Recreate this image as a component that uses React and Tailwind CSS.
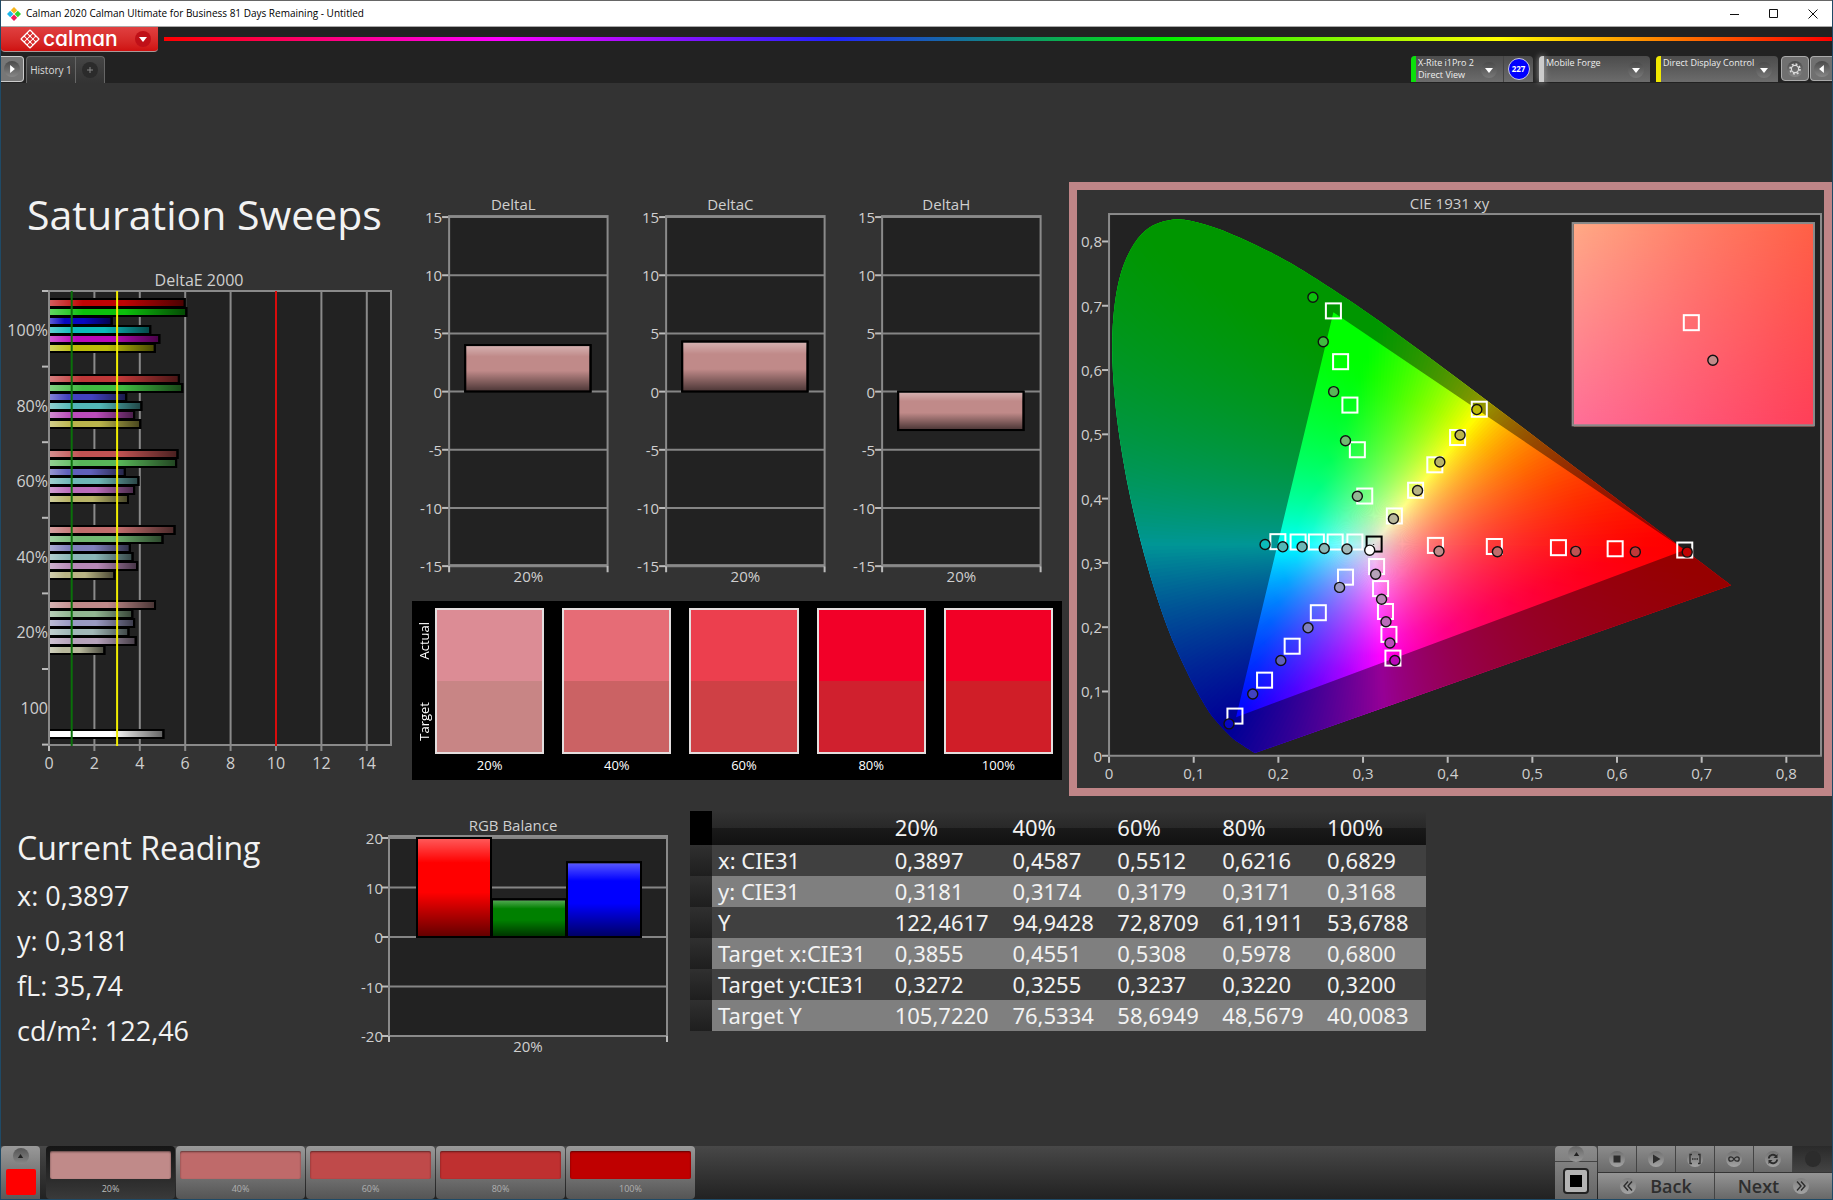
import React from "react";
import { clsx } from "clsx";

const SERIES = ["100%", "80%", "60%", "40%", "20%", "100"];

const GROUP_COLORS = [
  ["#c00404", "#0cc00c", "#0808c0", "#0cbaba", "#ba08ba", "#bcbc08"],
  ["#bf3838", "#40ba40", "#4242c0", "#52b6b6", "#ba4cba", "#bab44c"],
  ["#bf5252", "#58b658", "#6060ba", "#6eb6b6", "#ba6cba", "#b8b468"],
  ["#c06c6c", "#72b872", "#8080bc", "#8ab6b6", "#b688b6", "#b8b484"],
  ["#c08a8a", "#92b692", "#9a9ac2", "#a2b8b8", "#b6a2ba", "#b8b89c"],
];

const DELTA_E = [
  [5.98, 6.05, 2.76, 4.46, 4.86, 4.66],
  [5.72, 5.87, 3.4, 4.07, 3.75, 4.02],
  [5.66, 5.6, 3.34, 3.94, 3.75, 3.48],
  [5.53, 5.0, 3.56, 3.68, 3.88, 2.88],
  [4.67, 3.67, 3.75, 3.5, 3.82, 2.44],
];

const DELTAS = [
  { title: "DeltaL", value: 4.0 },
  { title: "DeltaC", value: 4.3 },
  { title: "DeltaH", value: -3.3 },
];

const SWATCHES = [
  { label: "20%", actual: "#dc8c95", target: "#c88585" },
  { label: "40%", actual: "#e66c76", target: "#cb6264" },
  { label: "60%", actual: "#ec3f4e", target: "#cf4045" },
  { label: "80%", actual: "#f20028", target: "#d0202e" },
  { label: "100%", actual: "#f20026", target: "#d01e28" },
];

const LEVELS = [
  { label: "20%", color: "#c08a89" },
  { label: "40%", color: "#bf6a6a" },
  { label: "60%", color: "#bf4a4a" },
  { label: "80%", color: "#bf3030" },
  { label: "100%", color: "#bf0000" },
];

const READINGS = ["x: 0,3897", "y: 0,3181", "fL: 35,74", "cd/m²: 122,46"];

const TABLE_ROWS = [
  ["x: CIE31", "0,3897", "0,4587", "0,5512", "0,6216", "0,6829"],
  ["y: CIE31", "0,3181", "0,3174", "0,3179", "0,3171", "0,3168"],
  ["Y", "122,4617", "94,9428", "72,8709", "61,1911", "53,6788"],
  ["Target x:CIE31", "0,3855", "0,4551", "0,5308", "0,5978", "0,6800"],
  ["Target y:CIE31", "0,3272", "0,3255", "0,3237", "0,3220", "0,3200"],
  ["Target Y", "105,7220", "76,5334", "58,6949", "48,5679", "40,0083"],
];

// Spectral locus, 1931 xy
const LOCUS = [
  [0.1741, 0.005], [0.1714, 0.0051], [0.1644, 0.0109], [0.1566, 0.0177], [0.144, 0.0297],
  [0.1241, 0.0578], [0.1096, 0.0868], [0.0913, 0.1327], [0.0687, 0.2007], [0.0454, 0.295],
  [0.0235, 0.4127], [0.0082, 0.5384], [0.0039, 0.6548], [0.0139, 0.7502], [0.0389, 0.812],
  [0.0743, 0.8338], [0.1142, 0.8262], [0.1547, 0.8059], [0.1929, 0.7816], [0.2296, 0.7543],
  [0.3016, 0.6923], [0.3731, 0.6245], [0.4441, 0.5547], [0.5125, 0.4866], [0.5752, 0.4242],
  [0.627, 0.3725], [0.6658, 0.334], [0.6915, 0.3083], [0.719, 0.2809], [0.7347, 0.2653],
];

const GAMUT = [[0.68, 0.32], [0.265, 0.69], [0.15, 0.06]];

// Each sweep runs from 100% down to 20%
const TARGETS = [
  [[0.68, 0.32], [0.5978, 0.322], [0.5308, 0.3237], [0.4551, 0.3255], [0.3855, 0.3272]],
  [[0.265, 0.692], [0.2735, 0.613], [0.2845, 0.5455], [0.2933, 0.476], [0.302, 0.404]],
  [[0.1487, 0.0617], [0.1837, 0.1176], [0.2163, 0.1704], [0.2472, 0.2225], [0.2793, 0.2778]],
  [[0.1994, 0.333], [0.2233, 0.3325], [0.2449, 0.3325], [0.2671, 0.3325], [0.2904, 0.3325]],
  [[0.3353, 0.1519], [0.3306, 0.1888], [0.3265, 0.2244], [0.3207, 0.26], [0.316, 0.2943]],
  [[0.4373, 0.539], [0.4117, 0.495], [0.3848, 0.4526], [0.3621, 0.413], [0.337, 0.373]],
];

const ACTUALS = [
  [[0.6829, 0.3168], [0.6216, 0.3171], [0.5512, 0.3179], [0.4587, 0.3174], [0.3897, 0.3181]],
  [[0.2408, 0.7133], [0.253, 0.644], [0.2653, 0.5664], [0.2793, 0.49], [0.2933, 0.4037]],
  [[0.1417, 0.0496], [0.1697, 0.096], [0.2029, 0.1481], [0.235, 0.199], [0.2723, 0.2619]],
  [[0.1843, 0.3287], [0.2052, 0.325], [0.228, 0.325], [0.2542, 0.3223], [0.281, 0.3217]],
  [[0.3376, 0.1481], [0.3318, 0.1755], [0.3271, 0.2085], [0.3219, 0.2435], [0.3149, 0.2823]],
  [[0.4344, 0.5385], [0.4146, 0.499], [0.3907, 0.457], [0.3644, 0.4126], [0.3359, 0.3687]],
];

const WHITE = [0.3127, 0.329];

const px = (x) => 32 + x * 845.5;
const py = (y) => 565 - y * 642;

const smoothPath = (list) => {
  const p = list.map(([x, y]) => [px(x), py(y)]);
  let d = `M${p[0][0]} ${p[0][1]}`;
  for (let i = 0; i < p.length - 1; i++) {
    const a = p[Math.max(i - 1, 0)];
    const b = p[i];
    const c = p[i + 1];
    const e = p[Math.min(i + 2, p.length - 1)];
    d += `C${b[0] + (c[0] - a[0]) / 6} ${b[1] + (c[1] - a[1]) / 6} ${c[0] - (e[0] - b[0]) / 6} ${
      c[1] - (e[1] - b[1]) / 6
    } ${c[0]} ${c[1]}`;
  }
  return d + "Z";
};

const gamutPath = `M${GAMUT.map(([x, y]) => `${px(x)} ${py(y)}`).join("L")}Z`;

const xyToRgb = (x, y) => {
  const sy = Math.max(y, 0.001);
  const X = x / sy;
  const Z = (1 - x - sy) / sy;
  const rgb = [
    3.2406 * X - 1.5372 - 0.4986 * Z,
    -0.9689 * X + 1.8758 + 0.0415 * Z,
    0.0557 * X - 0.204 + 1.057 * Z,
  ].map((v) => Math.max(v, 0));
  const max = Math.max(...rgb);
  return `rgb(${rgb.map((v) => Math.round((255 * v) / max)).join(",")})`;
};

// The diagram is filled with thin wedges round the white point
const WEDGES = 360;
const RADIUS = 440;
const STOPS = Array.from({ length: 25 }, (_, i) => Math.pow(i / 24, 1.4));

const wedges = Array.from({ length: WEDGES }, (_, i) => {
  const step = (2 * Math.PI) / WEDGES;
  const angle = i * step;
  const cx = px(WHITE[0]);
  const cy = py(WHITE[1]);
  const at = (a, r) => [cx + Math.cos(a) * r, cy + Math.sin(a) * r];
  const [x1, y1] = at(angle - step / 2, RADIUS + 20);
  const [x2, y2] = at(angle + step * 1.5, RADIUS + 20);
  return {
    id: `wedge-${i}`,
    points: `${cx},${cy} ${x1},${y1} ${x2},${y2}`,
    stops: STOPS.map((t) => {
      const [x, y] = at(angle, t * RADIUS);
      return { t, color: xyToRgb((x - 32) / 845.5, (565 - y) / 642) };
    }),
  };
});

const Shades = ({ id, vertical }) => (
  <linearGradient id={id} x1="0" y1="0" x2={vertical ? 0 : 1} y2={vertical ? 1 : 0}>
    <stop offset="0" stopColor="#fff" stopOpacity="0.36" />
    <stop offset="0.25" stopColor="#fff" stopOpacity="0" />
    <stop offset="0.55" stopColor="#000" stopOpacity="0" />
    <stop offset="1" stopColor="#000" stopOpacity="0.62" />
  </linearGradient>
);

const Bar = ({ x, y, width, height, color, shade }) => (
  <g stroke="#000" strokeWidth="2">
    <rect x={x} y={y} width={width} height={height} fill={color} />
    <rect x={x} y={y} width={width} height={height} fill={`url(#${shade})`} />
  </g>
);

const CHART_TEXT = "fill-[#cfcfcf] font-['Open_Sans',sans-serif] text-[15px]";
const CHART_TEXT_LG = "fill-[#cfcfcf] font-['Open_Sans',sans-serif] text-base";

const DeltaEChart = () => {
  const left = 48;
  const top = 29;
  const unit = 22.7;
  const group = 75.6;
  return (
    <svg viewBox="0 0 411 518" className="block w-full" role="img" aria-label="DeltaE 2000">
      <defs>
        <Shades id="shade-e" />
      </defs>
      <text x="198" y="24" textAnchor="middle" className={CHART_TEXT_LG}>
        DeltaE 2000
      </text>
      <rect x={left} y={top} width="342" height="454" fill="#222" />
      {[2, 4, 6, 8, 10, 12, 14].map((v) => (
        <line key={v} x1={left + v * unit} x2={left + v * unit} y1={top} y2={top + 460} stroke="#8a8a8a" strokeWidth="2" />
      ))}
      {[0, 1, 2, 3, 4, 5, 6].map((i) => (
        <line key={i} x1={left - 7} x2={left} y1={top + i * group} y2={top + i * group} stroke="#bbb" strokeWidth="2" />
      ))}
      <line x1={left} x2={left} y1={top + 454} y2={top + 460} stroke="#bbb" strokeWidth="2" />
      {DELTA_E.map((values, g) =>
        values.map((v, i) => (
          <Bar
            key={`${g}-${i}`}
            x={left}
            y={Math.round(top + 8 + g * group + i * 9)}
            width={v * unit}
            height="8"
            color={GROUP_COLORS[g][i]}
            shade="shade-e"
          />
        ))
      )}
      <Bar x={left} y={top + 439} width={5.04 * unit} height="8" color="#fff" shade="shade-e" />
      <rect x={left} y={top} width="342" height="454" fill="none" stroke="#8a8a8a" strokeWidth="2" />
      <line x1={left + unit} x2={left + unit} y1={top} y2={top + 455} stroke="#0a700a" strokeWidth="2" />
      <line x1={left + 3 * unit} x2={left + 3 * unit} y1={top} y2={top + 455} stroke="#f2ee00" strokeWidth="2" />
      <line x1={left + 10 * unit} x2={left + 10 * unit} y1={top} y2={top + 455} stroke="#d80c0c" strokeWidth="2" />
      {SERIES.map((label, i) => (
        <text key={label} x={left - 1} y={top + 45 + i * group} textAnchor="end" className={CHART_TEXT_LG}>
          {label}
        </text>
      ))}
      {[0, 2, 4, 6, 8, 10, 12, 14].map((v) => (
        <text key={v} x={left + v * unit} y={top + 478} textAnchor="middle" className={CHART_TEXT_LG}>
          {v}
        </text>
      ))}
    </svg>
  );
};

const DeltaChart = ({ title, value }) => {
  const zero = 200;
  const unit = 11.6;
  const h = Math.abs(value) * unit;
  return (
    <svg viewBox="0 0 216 400" className="block w-full" role="img" aria-label={title}>
      <defs>
        <Shades id={`shade-${title}`} vertical />
      </defs>
      <text x="101" y="19" textAnchor="middle" className={CHART_TEXT}>
        {title}
      </text>
      <rect x="37" y="25" width="158" height="348" fill="#222" />
      {[15, 10, 5, 0, -5, -10, -15].map((v) => (
        <g key={v}>
          <line x1="37" x2="195" y1={zero - v * unit} y2={zero - v * unit} stroke="#858585" strokeWidth="2" />
          <line x1="30" x2="37" y1={zero - v * unit} y2={zero - v * unit} stroke="#bbb" strokeWidth="2" />
          <text x="30" y={zero - v * unit + 6} textAnchor="end" className={CHART_TEXT}>
            {v}
          </text>
        </g>
      ))}
      <rect x="37" y="25" width="158" height="348" fill="none" stroke="#8a8a8a" strokeWidth="2" />
      <path d="M37 374v6M195 374v6" stroke="#bbb" strokeWidth="2" />
      <Bar
        x="53"
        y={value > 0 ? zero - h : zero}
        width="125"
        height={h}
        color="#c08a89"
        shade={`shade-${title}`}
      />
      <text x="116" y="390" textAnchor="middle" className={CHART_TEXT}>
        20%
      </text>
    </svg>
  );
};

const RgbChart = () => {
  const zero = 137;
  const unit = 4.95;
  const bars = [
    { value: 20, color: "#ff0000" },
    { value: 7.6, color: "#008000" },
    { value: 15.1, color: "#0000ff" },
  ];
  return (
    <svg viewBox="0 0 340 260" className="block w-full" role="img" aria-label="RGB Balance">
      <defs>
        <Shades id="shade-rgb" vertical />
      </defs>
      <text x="163" y="31" textAnchor="middle" className={CHART_TEXT}>
        RGB Balance
      </text>
      <rect x="39" y="36" width="278" height="200" fill="#222" />
      {[20, 10, 0, -10, -20].map((v) => (
        <g key={v}>
          <line x1="39" x2="317" y1={zero - v * unit} y2={zero - v * unit} stroke="#858585" strokeWidth="2" />
          <line x1="32" x2="39" y1={zero - v * unit} y2={zero - v * unit} stroke="#bbb" strokeWidth="2" />
          <text x="33" y={zero - v * unit + 6} textAnchor="end" className={CHART_TEXT}>
            {v}
          </text>
        </g>
      ))}
      <rect x="39" y="36" width="278" height="200" fill="none" stroke="#8a8a8a" strokeWidth="2" />
      <path d="M39 236v6M317 236v6" stroke="#bbb" strokeWidth="2" />
      {bars.map((bar, i) => (
        <Bar
          key={bar.color}
          x={67 + i * 75}
          y={zero - bar.value * unit}
          width="74"
          height={bar.value * unit}
          color={bar.color}
          shade="shade-rgb"
        />
      ))}
      <text x="178" y="252" textAnchor="middle" className={CHART_TEXT}>
        20%
      </text>
    </svg>
  );
};

const CieChart = () => (
  <svg viewBox="0 0 746 597" className="block w-full" role="img" aria-label="CIE 1931 xy">
    <defs>
      <clipPath id="locus">
        <path d={smoothPath(LOCUS)} />
      </clipPath>
      {wedges.map((w) => (
        <radialGradient
          key={w.id}
          id={w.id}
          gradientUnits="userSpaceOnUse"
          cx={px(WHITE[0])}
          cy={py(WHITE[1])}
          r={RADIUS}
        >
          {w.stops.map((s) => (
            <stop key={s.t} offset={s.t} stopColor={s.color} />
          ))}
        </radialGradient>
      ))}
      <linearGradient id="inset-top">
        <stop offset="0" stopColor="#ffaa86" />
        <stop offset="0.5" stopColor="#ff8068" />
        <stop offset="1" stopColor="#ff6045" />
      </linearGradient>
      <linearGradient id="inset-bottom">
        <stop offset="0" stopColor="#ff6e98" />
        <stop offset="1" stopColor="#ff3e58" />
      </linearGradient>
      <linearGradient id="inset-fade" x1="0" y1="0" x2="0" y2="1">
        <stop offset="0" stopColor="#000" />
        <stop offset="1" stopColor="#fff" />
      </linearGradient>
      <mask id="inset-mask">
        <rect x="496" y="33" width="240" height="203" fill="url(#inset-fade)" />
      </mask>
    </defs>
    <text x="372" y="19" textAnchor="middle" className={CHART_TEXT}>
      CIE 1931 xy
    </text>
    <rect x="32" y="24" width="711" height="541" fill="#222" stroke="#8a8a8a" strokeWidth="2" />

    <g clipPath="url(#locus)">
      {wedges.map((w) => (
        <polygon key={w.id} points={w.points} fill={`url(#${w.id})`} />
      ))}
      <path d={`M0 0H746V597H0Z${gamutPath}`} fillRule="evenodd" fill="#000" fillOpacity="0.41" />
    </g>

    {[0, 1, 2, 3, 4, 5, 6, 7, 8].map((v) => {
      const label = v === 0 ? "0" : `0,${v}`;
      return (
        <g key={v}>
          <line x1={px(v / 10)} x2={px(v / 10)} y1="566" y2="572" stroke="#bbb" strokeWidth="2" />
          <line x1="25" x2="31" y1={py(v / 10)} y2={py(v / 10)} stroke="#bbb" strokeWidth="2" />
          <text x={px(v / 10)} y="588" textAnchor="middle" className={CHART_TEXT}>
            {label}
          </text>
          <text x="25" y={py(v / 10) + 6} textAnchor="end" className={CHART_TEXT}>
            {label}
          </text>
        </g>
      );
    })}

    {TARGETS.flat().map(([x, y]) => (
      <rect key={`${x}-${y}`} x={px(x) - 7.5} y={py(y) - 7.5} width="15" height="15" fill="none" stroke="#fff" strokeWidth="2" />
    ))}
    <rect x={px(0.3131) - 7.5} y={py(0.3293) - 7.5} width="15" height="15" fill="none" stroke="#000" strokeWidth="2" />
    {ACTUALS.map((sweep, s) =>
      sweep.map(([x, y], level) => (
        <circle key={`${x}-${y}`} cx={px(x)} cy={py(y)} r="5" fill={GROUP_COLORS[level][s]} stroke="#111" strokeWidth="1.4" />
      ))
    )}
    <circle cx={px(0.3079)} cy={py(0.3198)} r="5" fill="#fff" stroke="#111" strokeWidth="1.4" />

    <rect x="496" y="33" width="240" height="203" fill="url(#inset-top)" />
    <rect x="496" y="33" width="240" height="203" fill="url(#inset-bottom)" mask="url(#inset-mask)" />
    <rect x="495" y="33" width="241" height="202" fill="none" stroke="#8a8a8a" strokeWidth="2" />
    <rect x="606" y="125" width="15" height="15" fill="none" stroke="#fff" strokeWidth="2" />
    <circle cx="635" cy="170" r="5" fill="#c08a89" stroke="#111" strokeWidth="1.4" />
  </svg>
);

const RoundIcon = ({ className, children }) => (
  <span
    className={clsx("flex size-4 shrink-0 items-center justify-center rounded-full bg-linear-to-b", className)}
  >
    {children}
  </span>
);

const CaretDown = () => (
  <svg viewBox="0 0 10 6" className="h-[5px] w-2">
    <path d="M0 0h10L5 6z" fill="#fff" />
  </svg>
);

const TitleBar = () => (
  <div className="flex h-[27px] items-center border-t border-b border-t-[#666] border-b-[#aaa] bg-white">
    <svg viewBox="0 0 14 14" className="ml-[6px] size-[14px]">
      <path d="M7 0l3.2 3.2L7 6.4 3.8 3.2z" fill="#f7b51c" />
      <path d="M3.2 3.8L6.4 7l-3.2 3.2L0 7z" fill="#19b6ea" />
      <path d="M10.8 3.8L14 7l-3.2 3.2L7.6 7z" fill="#2fd12f" />
      <path d="M7 7.6l3.2 3.2L7 14l-3.2-3.2z" fill="#ee1c5c" />
    </svg>
    <span className="ml-[5px] font-['Open_Sans',sans-serif] text-[10px] text-black">
      Calman 2020 Calman Ultimate for Business 81 Days Remaining - Untitled
    </span>
    <div className="ml-auto flex h-full">
      <button type="button" aria-label="Minimize" className="flex w-[39px] items-center justify-center">
        <svg viewBox="0 0 10 10" className="size-[10px]">
          <path d="M0 5.5h9" stroke="#111" />
        </svg>
      </button>
      <button type="button" aria-label="Maximize" className="flex w-[39px] items-center justify-center">
        <svg viewBox="0 0 10 10" className="size-[10px]">
          <path d="M.5.5h8v8h-8z" stroke="#111" fill="none" />
        </svg>
      </button>
      <button type="button" aria-label="Close" className="flex w-[39px] items-center justify-center">
        <svg viewBox="0 0 10 10" className="size-[10px]">
          <path d="M.5.5l9 9M9.5.5l-9 9" stroke="#111" />
        </svg>
      </button>
    </div>
  </div>
);

const Logo = () => (
  <svg viewBox="0 0 20 20" className="size-5">
    <g transform="rotate(45 10 10)">
      <rect x="3" y="3" width="14" height="14" rx="1" fill="#fff" />
      {[4.3, 8.4, 12.5].map((x) =>
        [4.3, 8.4, 12.5].map((y) => <rect key={`${x}-${y}`} x={x} y={y} width="3.2" height="3.2" rx="0.6" fill="#d82828" />)
      )}
    </g>
  </svg>
);

const DeviceMenu = ({ lines, bar, width, children }) => (
  <div className={clsx("flex h-[26px] rounded-t-sm bg-linear-to-b from-[#4c4c4c] to-[#6c6c6c]", width)}>
    <button type="button" aria-haspopup="menu" className="flex min-w-0 flex-1 text-left">
      <span className={clsx("h-full w-[5px] shrink-0 rounded-tl-sm", bar)} />
      <span className="mt-px ml-[2px] min-w-0 flex-1 font-['Open_Sans',sans-serif] text-[9px] leading-3 whitespace-nowrap text-[#eee]">
        {lines.map((line) => (
          <span key={line} className="block">
            {line}
          </span>
        ))}
      </span>
      <RoundIcon className="mt-[6px] mr-[6px] from-[#4a4a4a] to-[#787878]">
        <CaretDown />
      </RoundIcon>
    </button>
    {children}
  </div>
);

const Header = () => (
  <header className="bg-[#222]">
    <div className="flex h-[29px] items-start">
      <button
        type="button"
        className="flex h-[25px] w-[157px] items-center rounded-b-[4px] border-b border-[#a99] bg-linear-to-b from-[#e04040] to-[#cf0f0f] pl-[19px]"
      >
        <Logo />
        <span className="ml-[3px] font-['Inter',sans-serif] text-[21px] leading-5 font-medium text-white [font-feature-settings:'cv11']">
          calman
        </span>
        <span className="mr-[7px] ml-auto flex size-4 items-center justify-center rounded-full bg-[#c01018]">
          <CaretDown />
        </span>
      </button>
      <div className="mt-[10px] ml-[6px] h-1 flex-1 bg-[linear-gradient(to_right,#f00,#f0f_20%,#22f_40%,#0e0_60%,#ff0_80%,#f00)]" />
    </div>
    <div className="flex h-[27px]">
      <button
        type="button"
        aria-label="Expand panel"
        className="flex h-[26px] w-[23px] items-center justify-center rounded-r-[4px] border border-l-0 border-[#ccc] bg-[#777]"
      >
        <RoundIcon className="from-[#4a4a4a] to-[#888]">
          <svg viewBox="0 0 6 10" className="h-2 w-[5px]">
            <path d="M0 0l6 5-6 5z" fill="#fff" />
          </svg>
        </RoundIcon>
      </button>
      <div className="ml-[2px] flex rounded-t-[4px] border border-b-0 border-[#666] bg-linear-to-b from-[#454545] to-[#333]">
        <button
          type="button"
          className="w-[49px] border-r border-[#666] font-['Open_Sans',sans-serif] text-[10px] whitespace-nowrap text-[#ddd]"
        >
          History 1
        </button>
        <button type="button" aria-label="Add history" className="flex w-7 items-center justify-center">
          <span className="flex size-4 items-center justify-center rounded-full bg-[#2b2b2b]">
            <svg viewBox="0 0 6 6" className="size-[6px]">
              <path d="M3 0v6M0 3h6" stroke="#888" />
            </svg>
          </span>
        </button>
      </div>
      <div className="ml-auto flex">
        <DeviceMenu lines={["X-Rite i1Pro 2", "Direct View"]} bar="bg-[#0be00b]" width="w-[122px]">
          <span className="flex w-[30px] items-center justify-center border-l border-[#444]">
            <span className="flex size-[22px] items-center justify-center rounded-full border border-[#ccd] bg-[#00f] font-['Open_Sans',sans-serif] text-[8px] font-bold text-white">
              227
            </span>
          </span>
        </DeviceMenu>
        <span className="w-[6px]" />
        <DeviceMenu lines={["Mobile Forge"]} bar="bg-[#ccc] shadow-[0_0_6px_#aaa]" width="w-[111px]" />
        <span className="w-[6px]" />
        <DeviceMenu lines={["Direct Display Control"]} bar="bg-[#f0e800]" width="w-[122px]" />
        <button
          type="button"
          aria-label="Settings"
          className="ml-[3px] flex h-[25px] w-7 items-center justify-center rounded-[4px] border border-[#aaa] bg-[#707070]"
        >
          <RoundIcon className="from-[#4a4a4a] to-[#888]">
            <svg viewBox="0 0 12 12" className="size-3">
              <circle cx="6" cy="6" r="3.6" fill="none" stroke="#ddd" strokeWidth="1.2" />
              <circle cx="6" cy="6" r="5" fill="none" stroke="#ddd" strokeWidth="1.6" strokeDasharray="1.96 1.96" />
            </svg>
          </RoundIcon>
        </button>
        <button
          type="button"
          aria-label="Collapse panel"
          className="ml-px flex h-[25px] w-[22px] items-center justify-center rounded-l-[4px] border border-r-0 border-[#aaa] bg-[#707070]"
        >
          <RoundIcon className="from-[#4a4a4a] to-[#888]">
            <svg viewBox="0 0 6 10" className="h-2 w-[5px]">
              <path d="M6 0L0 5l6 5z" fill="#fff" />
            </svg>
          </RoundIcon>
        </button>
      </div>
    </div>
  </header>
);

const SwatchPanel = () => (
  <div className="flex bg-black pt-[7px] pr-[9px] pb-[5px] font-['Open_Sans',sans-serif] text-[13px] leading-5 text-white">
    <div className="flex h-[146px] w-[23px] flex-col items-center justify-between py-[14px]">
      <span className="rotate-180 [writing-mode:vertical-rl]">Actual</span>
      <span className="rotate-180 [writing-mode:vertical-rl]">Target</span>
    </div>
    <div className="grid flex-1 grid-cols-5 gap-[18px]">
      {SWATCHES.map((s) => (
        <div key={s.label} className="text-center">
          <div className="h-[146px] border-2 border-[#e4dede]">
            <div className="h-1/2" style={{ backgroundColor: s.actual }} />
            <div className="h-1/2" style={{ backgroundColor: s.target }} />
          </div>
          <div className="mt-px">{s.label}</div>
        </div>
      ))}
    </div>
  </div>
);

const ReadingsTable = () => (
  <table className="w-full table-fixed border-collapse font-['Noto_Sans',sans-serif] text-[22px] leading-[31px] text-[#f2f2f2]">
    <colgroup>
      <col className="w-[3%]" />
      <col className="w-[24%]" />
      <col className="w-[16%]" />
      <col />
      <col />
      <col />
      <col />
    </colgroup>
    <thead>
      <tr className="h-[34px] bg-[linear-gradient(#333,#282828_50%,#1a1a1a_50%,#111)] text-left">
        <td className="bg-black" />
        <td />
        {["20%", "40%", "60%", "80%", "100%"].map((h) => (
          <th key={h} scope="col" className="pl-[6px] font-normal">
            {h}
          </th>
        ))}
      </tr>
    </thead>
    <tbody>
      {TABLE_ROWS.map((row, i) => (
        <tr key={row[0]} className={i % 2 ? "bg-[#7f7f7f]" : "bg-[#404040]"}>
          <td className="bg-linear-to-b from-[#303030] to-[#1e1e1e]" />
          {row.map((cell, c) => (
            <td key={c} className="pl-[6px] whitespace-nowrap">
              {cell}
            </td>
          ))}
        </tr>
      ))}
    </tbody>
  </table>
);

const TransportButton = ({ label, children }) => (
  <button
    type="button"
    aria-label={label}
    className="flex items-center justify-center border-r border-[#444] bg-linear-to-b from-[#8c8c8c] to-[#6a6a6a]"
  >
    <RoundIcon className="from-[#707070] to-[#a4a4a4]">
      <svg viewBox="0 0 12 12" className="size-3" fill="none" stroke="#2c2c2c" strokeWidth="1.3">
        {children}
      </svg>
    </RoundIcon>
  </button>
);

const Footer = () => (
  <footer className="mt-auto flex h-[54px] border-b border-[#1f4a66] bg-linear-to-b from-[#484848] to-[#222] font-['Open_Sans',sans-serif]">
    <button
      type="button"
      aria-label="Current color"
      className="flex w-[39px] flex-col items-center rounded-t-[4px] bg-linear-to-b from-[#999] to-[#5a5a5a]"
    >
      <RoundIcon className="mt-[2px] from-[#555] to-[#888]">
        <svg viewBox="0 0 8 6" className="h-1 w-[7px]">
          <path d="M4 0l4 6H0z" fill="#222" />
        </svg>
      </RoundIcon>
      <span className="mt-[5px] h-[26px] w-[30px] rounded-xs bg-[#f00]" />
    </button>
    <div className="ml-[6px] flex gap-px">
      {LEVELS.map((level, i) => (
        <button
          key={level.label}
          type="button"
          className={clsx(
            "flex w-[129px] flex-col rounded-[4px] bg-linear-to-b px-1 pt-[5px] text-[9px] leading-5",
            i === 0 ? "from-[#151515] to-[#3a3a3a] text-[#bbb]" : "from-[#999] to-[#555] text-[#b0b0b0]"
          )}
        >
          <span
            className="h-[31px] w-full rounded-xs shadow-[inset_0_1px_2px_rgba(0,0,0,0.5)]"
            style={{ backgroundColor: level.color }}
          />
          <span className="w-full text-center">{level.label}</span>
        </button>
      ))}
    </div>
    <div className="ml-auto flex">
      <div className="flex w-[42px] flex-col rounded-t-[4px] bg-linear-to-b from-[#8c8c8c] to-[#666]">
        <button type="button" aria-label="Show more" className="flex h-4 items-center justify-center border-b border-[#444]">
          <RoundIcon className="from-[#666] to-[#999]">
            <svg viewBox="0 0 8 6" className="h-1 w-[7px]">
              <path d="M4 0l4 6H0z" fill="#222" />
            </svg>
          </RoundIcon>
        </button>
        <button type="button" aria-label="Pattern window" className="flex flex-1 items-center justify-center">
          <span className="flex size-[26px] items-center justify-center rounded-[4px] border-2 border-[#222] bg-[#b4b4b4]">
            <span className="size-3 bg-black" />
          </span>
        </button>
      </div>
      <div className="ml-px flex w-[234px] flex-col">
        <div className="grid h-[26px] grid-cols-6">
          <TransportButton label="Stop">
            <path d="M2.5 2.5h7v7h-7z" fill="#2c2c2c" stroke="none" />
          </TransportButton>
          <TransportButton label="Play">
            <path d="M3 1.5l7.5 4.5L3 10.5z" fill="#2c2c2c" stroke="none" />
          </TransportButton>
          <TransportButton label="Read series">
            <path d="M3 1.500H1v9h2M9 1.500h2v9H9" />
            <path d="M3 6h1.500M5.300 6h1.400M7.500 6H9" />
          </TransportButton>
          <TransportButton label="Read continuously">
            <path d="M6 6C5 4.300 4.200 3.800 3 3.800a2.200 2.200 0 000 4.400c1.200 0 2-.5 3-2.200s1.800-2.200 3-2.200a2.200 2.200 0 010 4.400C7.800 8.200 7 7.700 6 6z" />
          </TransportButton>
          <TransportButton label="Refresh">
            <path d="M1.800 5.500a4.200 4.200 0 017.400-2.200M10.200 6.500a4.200 4.200 0 01-7.400 2.200" strokeWidth="1.8" />
            <path d="M10.500 1v4h-4zM1.500 11V7h4z" fill="#2c2c2c" stroke="none" />
          </TransportButton>
          <span className="flex items-center justify-center bg-linear-to-b from-[#2a2a2a] to-[#444]">
            <span className="size-4 rounded-full bg-[#2c2c2c]" />
          </span>
        </div>
        <div className="grid flex-1 grid-cols-2 pt-px font-['Open_Sans',sans-serif] text-lg leading-6 font-semibold text-[#2e2e2e]">
          <button
            type="button"
            className="flex items-center justify-center gap-[14px] border-r border-[#444] bg-linear-to-b from-[#959595] to-[#686868]"
          >
            <RoundIcon className="from-[#808080] to-[#a4a4a4]">
              <svg viewBox="0 0 10 10" className="size-[10px]" fill="none" stroke="#2c2c2c" strokeWidth="1.4">
                <path d="M5 .5L1 5l4 4.5M9 .5L5 5l4 4.5" />
              </svg>
            </RoundIcon>
            Back
          </button>
          <button
            type="button"
            className="flex items-center justify-center gap-[14px] bg-linear-to-b from-[#959595] to-[#686868]"
          >
            Next
            <RoundIcon className="from-[#808080] to-[#a4a4a4]">
              <svg viewBox="0 0 10 10" className="size-[10px]" fill="none" stroke="#2c2c2c" strokeWidth="1.4">
                <path d="M1 .5L5 5 1 9.5M5 .5L9 5 5 9.5" />
              </svg>
            </RoundIcon>
          </button>
        </div>
      </div>
    </div>
  </footer>
);

export default function App() {
  return (
    <div className="flex min-h-screen flex-col border-x border-[#1f4a66] bg-[#333]">
      <TitleBar />
      <Header />
      <main>
        <div className="grid grid-cols-[411fr_650fr_770fr] items-start pt-[99px]">
          <section>
            <h1 className="pb-4 pl-[26px] font-['Open_Sans',sans-serif] text-[41px] leading-[64px] whitespace-nowrap text-[#f2f2f2]">
              Saturation Sweeps
            </h1>
            <DeltaEChart />
          </section>
          <section className="pt-[9px]">
            <div className="grid grid-cols-3">
              {DELTAS.map((d) => (
                <DeltaChart key={d.title} title={d.title} value={d.value} />
              ))}
            </div>
            <div className="mt-[9px]">
              <SwatchPanel />
            </div>
          </section>
          <section className="ml-[7px] border-8 border-[#bf8587]">
            <CieChart />
          </section>
        </div>
        <div className="grid grid-cols-[349fr_340fr_736fr_406fr] items-start">
          <section className="pt-7 pl-4 font-['Open_Sans',sans-serif] whitespace-nowrap text-[#f2f2f2]">
            <h2 className="pb-px text-[32px] leading-[48px]">Current Reading</h2>
            {READINGS.map((r) => (
              <p key={r} className="text-[27px] leading-[45px]">
                {r}
              </p>
            ))}
          </section>
          <section className="pt-1">
            <RgbChart />
          </section>
          <section className="pt-[15px]">
            <ReadingsTable />
          </section>
        </div>
      </main>
      <Footer />
    </div>
  );
}
